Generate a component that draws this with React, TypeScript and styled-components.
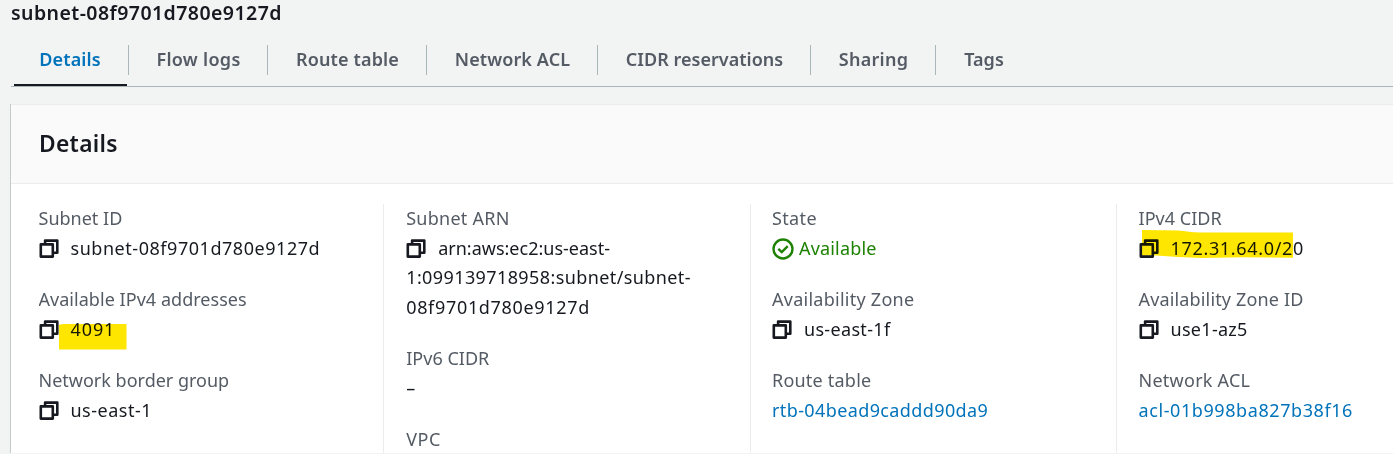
import React from 'react';
import styled, { createGlobalStyle } from 'styled-components';

const Global = createGlobalStyle`
  *, *::before, *::after { box-sizing: border-box; }
  body {
    margin: 0;
    overflow: hidden;
    background: #f2f3f3;
    color: #16191f;
    font-family: 'Noto Sans', 'Open Sans', sans-serif;
  }
`;

const Page = styled.main`
  display: flex;
  flex-direction: column;
  height: 454px;
  overflow: hidden;
  padding-bottom: 1px;
`;

const Title = styled.h1`
  flex: none;
  margin: 0;
  padding-left: 11px;
  height: 45px;
  font-size: 19.5px;
  font-weight: 600;
  line-height: 25px;
  letter-spacing: 0.44px;
`;

const TabBar = styled.nav`
  flex: none;
  display: flex;
  height: 42px;
  margin-left: 11px;
  padding-left: 3px;
  border-bottom: 1px solid #aab7b8;
`;

const Tab = styled.a<{ $width: number; $active?: boolean }>`
  flex: none;
  display: flex;
  flex-direction: column;
  justify-content: space-between;
  width: ${(p) => p.$width}px;
  color: ${(p) => (p.$active ? '#0073bb' : '#545b64')};

  &::after {
    content: '';
    height: 2px;
    margin-right: 2px;
    background: ${(p) => (p.$active ? '#16191f' : 'transparent')};
  }
`;

const TabLabel = styled.span<{ $spacing: number; $first?: boolean; $last?: boolean }>`
  height: 30px;
  padding-left: ${(p) => (p.$first || p.$last ? 0 : 1)}px;
  padding-right: ${(p) => (p.$first ? 2 : 0)}px;
  border-right: ${(p) => (p.$last ? 'none' : '1px solid #aab7b8')};
  font-size: 18px;
  font-weight: 600;
  line-height: 28px;
  letter-spacing: ${(p) => p.$spacing}px;
  text-align: center;
  white-space: nowrap;
`;

const Panel = styled.section`
  flex: 1;
  display: flex;
  flex-direction: column;
  min-height: 0;
  margin: 17px 0 0 10px;
  border-left: 1px solid #c4c9c9;
  background: #fff;
`;

const PanelHeader = styled.header`
  flex: none;
  display: flex;
  align-items: center;
  height: 80px;
  padding-left: 28px;
  border-top: 1px solid #eaeded;
  border-bottom: 1px solid #eaeded;
  background: #fafafa;
`;

const PanelTitle = styled.h2`
  margin: 0;
  font-size: 22.8px;
  font-weight: 600;
  line-height: 30px;
  letter-spacing: 0.3px;
`;

const Columns = styled.div`
  flex: 1;
  display: grid;
  grid-template-columns: 344.7px 366.6px 366.6px 1fr;
  min-height: 0;
  padding: 20px 0 0 27.5px;
`;

const Column = styled.div`
  min-width: 0;
  overflow: hidden;

  & + & {
    padding-left: 22px;
    border-left: 1px solid #eaeded;
  }

  &:nth-child(n + 3) {
    padding-left: 21.2px;
  }
`;

const Field = styled.dl`
  position: relative;
  margin: 0 0 22px;
  font-size: 18px;
  line-height: 29.5px;
  white-space: nowrap;
`;

const Label = styled.dt<{ $spacing: number }>`
  color: #545b64;
  letter-spacing: ${(p) => p.$spacing}px;
`;

const Value = styled.dd<{ $tone?: Tone }>`
  position: relative;
  margin: 0;
  color: ${(p) => (p.$tone === 'link' ? '#0073bb' : p.$tone === 'success' ? '#1d8102' : '#16191f')};
`;

const Line = styled.span<{ $spacing: number }>`
  letter-spacing: ${(p) => p.$spacing}px;
`;

const CopySvg = styled.svg`
  width: 20px;
  height: 20px;
  margin-right: 12px;
  vertical-align: -4px;
`;

const CheckSvg = styled.svg`
  width: 22px;
  height: 22px;
  margin-right: 5px;
  vertical-align: -5px;
`;

const Marker = styled.svg<{ $left: number; $top: number }>`
  position: absolute;
  left: ${(p) => p.$left}px;
  top: ${(p) => p.$top}px;
  mix-blend-mode: multiply;
  pointer-events: none;
`;

type Tone = 'link' | 'success';
type Text = [text: string, spacing: number];

interface FieldData {
  label: Text;
  lines: Text[];
  copy?: boolean;
  tone?: Tone;
  marker?: { left: number; top: number; width: number; height: number; d: string };
}

const CopyIcon = () => (
  <CopySvg viewBox="0 0 20 20" fill="none" stroke="#16191f" strokeWidth="2.6" strokeLinejoin="round">
    <path d="M1.8 5.4h12v12.2h-12z" />
    <path d="M6.1 5.4V1.6h12.2v12.2h-4.5" />
  </CopySvg>
);

const CheckIcon = () => (
  <CheckSvg viewBox="0 0 22 22" fill="none" stroke="#1d8102" strokeWidth="2.4">
    <circle cx="11" cy="11" r="9.5" />
    <path d="M6.3 10.8l3.5 3.3 5.9-5.9" />
  </CheckSvg>
);

const tabs: { text: string; width: number; spacing: number }[] = [
  { text: 'Details', width: 115, spacing: 0.13 },
  { text: 'Flow logs', width: 139, spacing: 0.3 },
  { text: 'Route table', width: 159, spacing: 0.14 },
  { text: 'Network ACL', width: 171, spacing: 0.1 },
  { text: 'CIDR reservations', width: 213, spacing: 0.02 },
  { text: 'Sharing', width: 125, spacing: 0.28 },
  { text: 'Tags', width: 96, spacing: 0.03 },
];

const columns: FieldData[][] = [
  [
    { label: ['Subnet ID', 0], lines: [['subnet-08f9701d780e9127d', 0.54]], copy: true },
    {
      label: ['Available IPv4 addresses', 0.04],
      lines: [['4091', 0.9]],
      copy: true,
      marker: { left: 20.5, top: 9, width: 68, height: 26, d: 'M0 0.8L5 0H67.5V25.5H0z' },
    },
    { label: ['Network border group', 0], lines: [['us-east-1', 0.5]], copy: true },
  ],
  [
    {
      label: ['Subnet ARN', 0.25],
      lines: [
        ['arn:aws:ec2:us-east-', 0],
        ['1:099139718958:subnet/subnet-', 0.4],
        ['08f9701d780e9127d', 0.67],
      ],
      copy: true,
    },
    { label: ['IPv6 CIDR', 0.02], lines: [['–', 0]] },
    { label: ['VPC', 0.5], lines: [] },
  ],
  [
    { label: ['State', 0.38], lines: [['Available', 0.18]], tone: 'success' },
    { label: ['Availability Zone', 0.26], lines: [['us-east-1f', 0.33]], copy: true },
    { label: ['Route table', 0.22], lines: [['rtb-04bead9caddd90da9', 0.39]], tone: 'link' },
  ],
  [
    {
      label: ['IPv4 CIDR', 0.03],
      lines: [['172.31.64.0/20', 0.66]],
      copy: true,
      marker: {
        left: 3.5,
        top: -4,
        width: 152,
        height: 29,
        d: 'M0 0L20 0.2L36 0.5C44 1 50 2.6 58 2.6H151V27.8L100 27.3L60 28L36 27C24 25.6 12 25.2 0 25.5z',
      },
    },
    { label: ['Availability Zone ID', 0.15], lines: [['use1-az5', 0.28]], copy: true },
    { label: ['Network ACL', 0.24], lines: [['acl-01b998ba827b38f16', 0.58]], tone: 'link' },
  ],
];

const DetailField = ({ label, lines, copy, tone, marker }: FieldData) => (
  <Field>
    <Label $spacing={label[1]}>{label[0]}</Label>
    <Value $tone={tone}>
      {copy && <CopyIcon />}
      {tone === 'success' && <CheckIcon />}
      {lines.map(([text, spacing], i) => (
        <React.Fragment key={text}>
          {i > 0 && <br />}
          <Line $spacing={spacing}>{text}</Line>
        </React.Fragment>
      ))}
      {marker && (
        <Marker $left={marker.left} $top={marker.top} width={marker.width} height={marker.height}>
          <path d={marker.d} fill="#ffe600" />
        </Marker>
      )}
    </Value>
  </Field>
);

export default function App() {
  return (
    <Page>
      <Global />
      <Title>subnet-08f9701d780e9127d</Title>
      <TabBar>
        {tabs.map((tab, i) => (
          <Tab key={tab.text} $width={tab.width} $active={i === 0}>
            <TabLabel $spacing={tab.spacing} $first={i === 0} $last={i === tabs.length - 1}>
              {tab.text}
            </TabLabel>
          </Tab>
        ))}
      </TabBar>
      <Panel>
        <PanelHeader>
          <PanelTitle>Details</PanelTitle>
        </PanelHeader>
        <Columns>
          {columns.map((fields, i) => (
            <Column key={i}>
              {fields.map((field) => (
                <DetailField key={field.label[0]} {...field} />
              ))}
            </Column>
          ))}
        </Columns>
      </Panel>
    </Page>
  );
}
